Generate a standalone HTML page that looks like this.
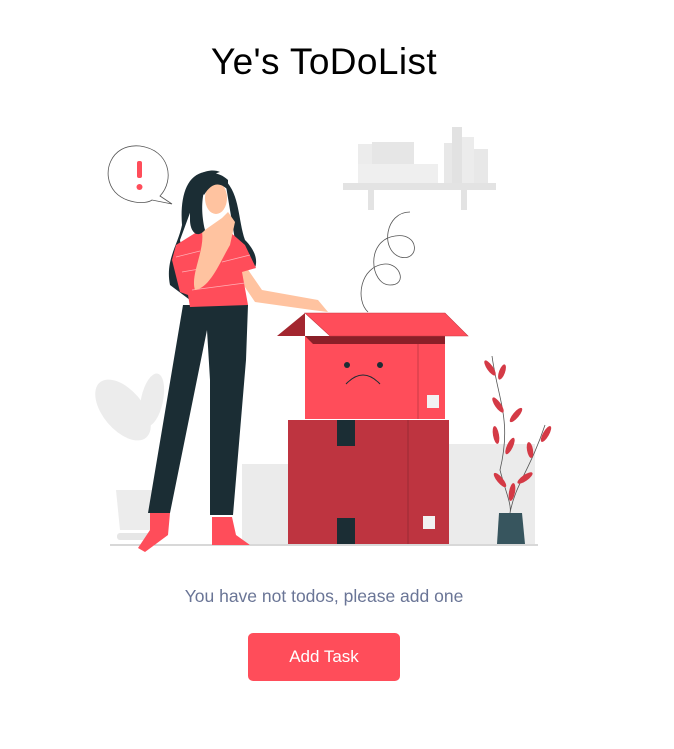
<!DOCTYPE html>
<html><head><meta charset="utf-8"><style>
html,body{margin:0;padding:0;background:#fff;width:674px;height:749px;overflow:hidden;font-family:"Liberation Sans",sans-serif}
h1{position:absolute;left:0;width:648px;top:41px;margin:0;text-align:center;font-size:37px;font-weight:normal;color:#000;letter-spacing:0.4px}
svg{position:absolute;left:0;top:0}
.msg{position:absolute;left:0;width:648px;top:586px;text-align:center;font-size:17.5px;color:#6a7596}
.btn{position:absolute;left:248px;top:633px;width:152px;height:48px;background:#ff4d5a;border-radius:5px;color:#fff;font-size:17px;text-align:center;line-height:48px}
</style></head><body>
<h1>Ye's ToDoList</h1>
<svg width="674" height="749" viewBox="0 0 674 749">
<rect x="358" y="144" width="56" height="24" fill="#ececec"/>
<rect x="372" y="142" width="42" height="26" fill="#e6e6e6"/>
<rect x="358" y="164" width="80" height="19" fill="#efefef"/>
<rect x="444" y="143" width="8" height="40" fill="#e8e8e8"/>
<rect x="452" y="127" width="10" height="56" fill="#e2e2e2"/>
<rect x="462" y="137" width="12" height="46" fill="#ececec"/>
<rect x="474" y="149" width="14" height="34" fill="#e8e8e8"/>
<rect x="343" y="183" width="153" height="7" fill="#e3e3e3"/>
<rect x="368" y="190" width="6" height="20" fill="#e3e3e3"/>
<rect x="461" y="190" width="6" height="20" fill="#e3e3e3"/>
<path d="M410 212 C385 212 380 250 400 257 C420 262 420 232 395 236 C365 240 370 285 390 285 C408 285 400 263 385 264 C360 266 355 300 368 312" fill="none" stroke="#555" stroke-width="0.8"/>
<rect x="242" y="464" width="46" height="80" fill="#ebebeb"/>
<rect x="449" y="444" width="86" height="100" fill="#ebebeb"/>
<ellipse cx="123" cy="410" rx="20" ry="36" transform="rotate(-40 123 410)" fill="#ececec"/>
<ellipse cx="152" cy="400" rx="11" ry="27" transform="rotate(12 152 400)" fill="#ececec"/>
<path d="M116 490 L120 530 L150 530 L154 490Z" fill="#ececec"/>
<rect x="117" y="533" width="40" height="7" rx="3" fill="#e6e6e6"/>
<rect x="288" y="420" width="161" height="124" fill="#be3440"/>
<line x1="408" y1="420" x2="408" y2="544" stroke="#9b2a33" stroke-width="1"/>
<rect x="337" y="420" width="18" height="26" fill="#1b2d34"/>
<rect x="337" y="518" width="18" height="26" fill="#1b2d34"/>
<rect x="423" y="516" width="12" height="13" fill="#f2f2f2"/>
<rect x="305" y="336" width="140" height="83" fill="#ff4d5a"/>
<line x1="418" y1="336" x2="418" y2="419" stroke="#c93a45" stroke-width="1"/>
<polygon points="305,336 445,336 445,344 313,344" fill="#8a1f28"/>
<polygon points="277,336 305,313 305,336" fill="#a3262f"/>
<polygon points="305,313 445,313 468,336 330,336" fill="#ff4d5a" stroke="#c93a45" stroke-width="0.6"/>
<circle cx="347" cy="365" r="3" fill="#1b2d34"/>
<circle cx="380" cy="365" r="3" fill="#1b2d34"/>
<path d="M346 384 Q363 366 380 384" fill="none" stroke="#1b2d34" stroke-width="1"/>
<rect x="427" y="395" width="12" height="13" fill="#f2f2f2"/>
<path d="M492 356 C498 400 512 420 500 470 C505 490 512 505 510 513 M545 425 C530 470 515 485 510 513" fill="none" stroke="#555" stroke-width="0.8"/>
<g fill="#d43a46">
<ellipse cx="490" cy="368" rx="3" ry="9" transform="rotate(-35 490 368)"/>
<ellipse cx="502" cy="372" rx="3" ry="8" transform="rotate(20 502 372)"/>
<ellipse cx="498" cy="405" rx="3" ry="9" transform="rotate(-35 498 405)"/>
<ellipse cx="516" cy="415" rx="3" ry="9" transform="rotate(40 516 415)"/>
<ellipse cx="496" cy="435" rx="3" ry="9" transform="rotate(-10 496 435)"/>
<ellipse cx="510" cy="446" rx="3" ry="9" transform="rotate(25 510 446)"/>
<ellipse cx="546" cy="434" rx="3" ry="9" transform="rotate(30 546 434)"/>
<ellipse cx="530" cy="450" rx="3" ry="8" transform="rotate(-10 530 450)"/>
<ellipse cx="500" cy="480" rx="3" ry="9" transform="rotate(-40 500 480)"/>
<ellipse cx="525" cy="478" rx="3" ry="9" transform="rotate(55 525 478)"/>
<ellipse cx="512" cy="492" rx="3" ry="9" transform="rotate(10 512 492)"/>
</g>
<path d="M499 513 L522 513 L525 544 L497 544Z" fill="#37555e"/>
<line x1="110" y1="545" x2="538" y2="545" stroke="#999" stroke-width="0.8"/>
<path d="M160 196 C175 180 170 150 140 146 C110 143 100 175 115 192 C125 203 145 205 152 200 L172 204Z" fill="#fff" stroke="#555" stroke-width="0.8"/>
<rect x="137" y="161" width="5" height="17" rx="2" fill="#ff4d5a"/>
<circle cx="139.5" cy="187" r="3" fill="#ff4d5a"/>
<path d="M205 172 C185 175 180 200 182 225 C178 245 165 260 170 285 L190 300 L180 240 Z" fill="#1b2d34"/>
<path d="M225 180 C240 195 238 220 245 240 C255 250 258 260 255 268 L235 240Z" fill="#1b2d34"/>
<path d="M240 258 L262 290 L318 300 L328 312 L312 310 L255 302 L232 268Z" fill="#ffc3a0"/>
<path d="M183 305 L248 305 L246 360 L233 515 L210 515 L210 380 L207 330 L170 513 L148 513 Z" fill="#1b2d34"/>
<path d="M176 245 L200 230 L230 232 L245 245 L256 268 L242 272 L248 305 L190 307 L188 295 L180 292 L172 260Z" fill="#ff4d5a"/>
<g stroke="#ffb0b6" stroke-width="0.7"><line x1="176" y1="257" x2="200" y2="251"/><line x1="182" y1="272" x2="205" y2="268"/><line x1="192" y1="290" x2="245" y2="283"/><line x1="222" y1="262" x2="250" y2="255"/></g>
<path d="M202 232 C205 250 190 275 195 290 C210 288 220 262 230 245 L235 222 L228 212 L222 218Z" fill="#ffc3a0"/>
<ellipse cx="216" cy="198" rx="11" ry="16" fill="#ffc3a0"/>
<path d="M200 190 C198 172 215 168 228 180 L228 190 C220 182 212 182 204 195 Z" fill="#1b2d34"/>
<path d="M190 185 C195 172 212 168 220 172 C205 175 198 200 205 230 C196 240 190 230 190 220Z" fill="#1b2d34"/>
<path d="M150 513 L170 513 L168 535 L145 552 L138 548 L150 530Z" fill="#ff4d5a"/>
<path d="M212 517 L232 517 L236 535 L250 545 L212 545Z" fill="#ff4d5a"/>
</svg>
<div class="msg">You have not todos, please add one</div>
<div class="btn">Add Task</div>
</body></html>
